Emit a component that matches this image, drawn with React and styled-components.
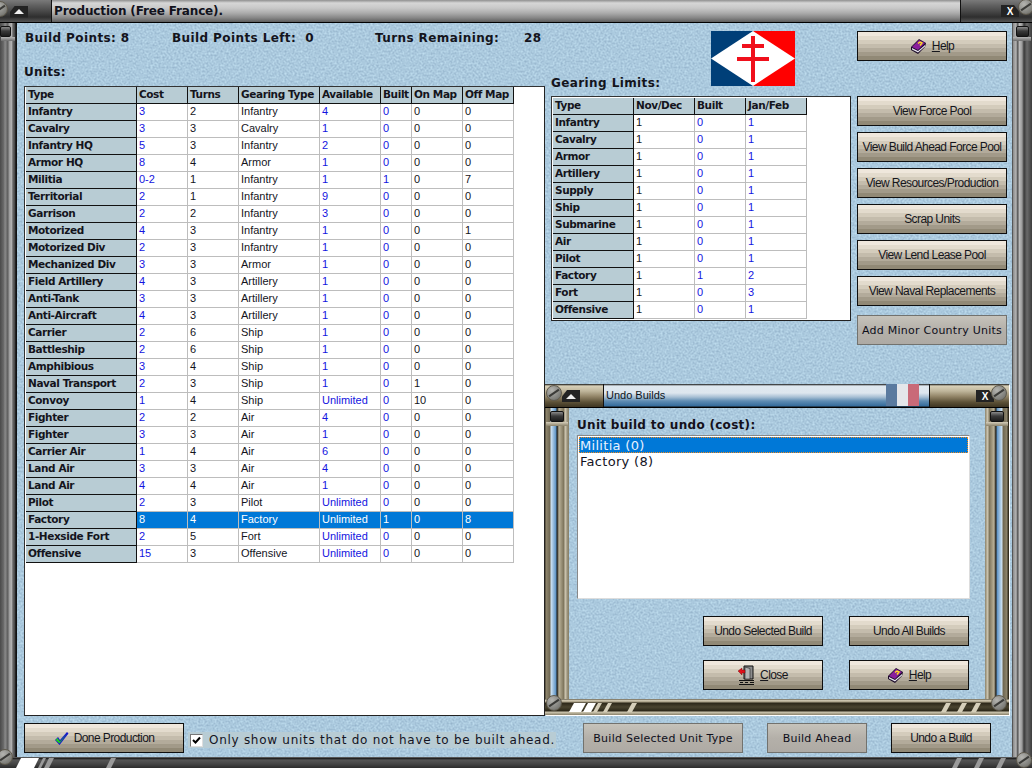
import React from "react";
import styled, { createGlobalStyle } from "styled-components";

const tones = {
  steel: {
    title: "linear-gradient(#8f8f8f 0,#d6d6d6 3px,#c8c8c8 8px,#acacac 13px,#858585 18px,#5c5c5c 22px)",
    cap: "linear-gradient(#7a7a7a 0,#5e5e5e 6px,#454545 12px,#2e2e2e 17px,#555 22px)",
    railL: "linear-gradient(90deg,#4a4a4a 0,#6d6d6d 4px,#8c8c8c 5px,#5a5a5a 8px,#9a9a9a 9px,#b4b4b4 12px,#454545 13px,#777 14px,#222 15px)",
    railR: "linear-gradient(90deg,#222 0,#8a8a8a 1px,#b4b4b4 4px,#444 6px,#c0c0c0 7px,#9a9a9a 10px,#3a3a3a 12px,#6a6a6a 15px,#3c3c3c 20px)",
    bottom: "linear-gradient(#9a9a9a 0,#111 1px,#555 3px,#444 7px,#2c2c2c 11px)",
  },
  brass: {
    title: "linear-gradient(#0f0f0f 0,#dfe8ef 2px,#dde6ee 9px,#a8c0d4 13px,#5f8cb2 17px,#356c9c 22px,#111 23px)",
    cap: "linear-gradient(#111 0,#d8d0b8 2px,#bfb69c 7px,#96896c 12px,#5d5238 18px,#3e3522 23px)",
    railL: "linear-gradient(90deg,#332d1e 0,#8f866e 1px,#6e6650 5px,#cfe3f3 6px,#5d93c4 11px,#16140e 12px,#b9b198 14px,#7a7158 19px,#d4cdb9 20px,#8b836b 23px)",
    railR: "linear-gradient(90deg,#8b836b 0,#d4cdb9 3px,#7a7158 4px,#b9b198 9px,#16140e 11px,#5d93c4 12px,#cfe3f3 17px,#6e6650 18px,#8f866e 22px,#332d1e 23px)",
    bottom: "linear-gradient(#3a3424 0,#d6cfba 1px,#a79e85 3px,#2c2719 4px,#4a4430 8px,#2c2719 12px,#cfc8b2 13px,#8a826a 16px)",
  },
};

const Global = createGlobalStyle`
  html, body { margin: 0; padding: 0; overflow: hidden; background: #333; }
  * { box-sizing: border-box; }
`;

const Frame = styled.div`
  display: grid;
  grid-template-columns: ${(p) => p.$left}px 1fr ${(p) => p.$right}px;
  grid-template-rows: ${(p) => p.$top}px 1fr ${(p) => p.$bottom}px;
  width: ${(p) => p.$w}px;
  height: ${(p) => p.$h}px;
  position: relative;
`;

const FloatingFrame = styled(Frame)`
  position: absolute;
  left: 528px;
  top: 361px;
  box-shadow: 1px 1px 0 #fff;
`;

const TitleBar = styled.div`
  grid-column: 1 / -1;
  display: flex;
  align-items: stretch;
  background: ${(p) => tones[p.$tone].title};
  border-bottom: 1px solid #000;
  position: relative;
`;

const TitleCap = styled.div`
  width: ${(p) => p.$w}px;
  flex: none;
  display: flex;
  align-items: center;
  justify-content: ${(p) => (p.$end ? "flex-end" : "flex-start")};
  padding: ${(p) => p.$pad};
  background: ${(p) => tones[p.$tone].cap};
  border-${(p) => (p.$end ? "left" : "right")}: 1px solid #111;
`;

const TitleText = styled.div`
  flex: 1;
  font: bold 12px "DejaVu Sans", sans-serif;
  letter-spacing: -0.15px;
  line-height: 23px;
  padding-left: 2px;
  color: #11121c;
`;

const SubTitleText = styled.div`
  flex: 1;
  font: 11px "Liberation Sans", sans-serif;
  line-height: 23px;
  padding-left: 2px;
  color: #0d1420;
`;

const CapButton = styled.div`
  width: 18px;
  height: 12px;
  background: #232323;
  clip-path: polygon(28% 0, 100% 0, 100% 100%, 0 100%, 0 55%);
  display: flex;
  align-items: center;
  justify-content: center;
  color: #fff;
  font: bold 10px "Liberation Sans", sans-serif;
`;

const CapButtonEnd = styled(CapButton)`
  clip-path: polygon(0 0, 72% 0, 100% 55%, 100% 100%, 0 100%);
`;

const Triangle = styled.span`
  width: 0;
  height: 0;
  border-left: 5px solid transparent;
  border-right: 5px solid transparent;
  border-bottom: 5px solid #eee;
`;

const FlagStripes = styled.div`
  display: flex;
  margin-right: 10px;
  flex: none;
`;

const Stripe = styled.span`
  width: 11px;
  height: 22px;
  background: ${(p) => p.$c};
`;

const Rail = styled.div`
  background: ${(p) => tones[p.$tone][p.$side]};
  position: relative;
  padding-top: 3px;
`;

const Knob = styled.div`
  height: 11px;
  width: ${(p) => p.$w}px;
  margin-left: ${(p) => p.$x}px;
  border-radius: 2px;
  border: 1px solid #111;
  background: linear-gradient(#8a8a8a, #3a3a3a 45%, #1c1c1c);
`;

const KnobCollar = styled.div`
  height: 4px;
  margin: 0 1px;
  background: linear-gradient(${(p) => (p.$tone === "brass" ? "#d4cdb9,#8b836b" : "#b5b5b5,#6c6c6c")});
`;

const BottomRail = styled.div`
  grid-column: 1 / -1;
  background: ${(p) => tones[p.$tone].bottom};
  display: flex;
  justify-content: space-between;
  padding: ${(p) => p.$pad};
`;

const Screw = styled.div`
  position: absolute;
  left: ${(p) => p.$x}px;
  top: ${(p) => p.$y}px;
  width: 16px;
  height: 16px;
  border-radius: 50%;
  background: radial-gradient(circle at 35% 30%, #b4b4b0, #7d7d78 70%, #55554f);
  border: 1px solid #5f5a4d;
  z-index: 3;
  &::after {
    content: "";
    position: absolute;
    left: 1px;
    right: 1px;
    top: 6px;
    height: 2px;
    background: #3b3b38;
    transform: rotate(-35deg);
  }
`;

const Content = styled.div`
  background-color: #a8c7de;
  border-left: 1px solid #111;
  position: relative;
  min-height: 0;
  min-width: 0;
`;

const TextureSvg = styled.svg`
  position: absolute;
  inset: 0;
  width: 100%;
  height: 100%;
  display: block;
`;

const Texture = ({ id }) => (
  <TextureSvg aria-hidden="true">
    <filter id={id} x="0" y="0" width="100%" height="100%" colorInterpolationFilters="sRGB">
      <feTurbulence type="fractalNoise" baseFrequency="0.5" numOctaves="3" seed="7" />
      <feColorMatrix values="0.24 0 0 0 0.55  0.24 0 0 0 0.67  0.20 0 0 0 0.77  0 0 0 0 1" />
    </filter>
    <rect width="100%" height="100%" filter={`url(#${id})`} />
  </TextureSvg>
);

const MainContent = styled(Content)`
  display: flex;
  flex-direction: column;
`;

const Main = styled.div`
  position: relative;
  display: flex;
  height: 693px;
  padding-left: 7px;
`;

const LeftCol = styled.div`
  width: 521px;
  flex: none;
  display: flex;
  flex-direction: column;
`;

const Stats = styled.div`
  height: 28px;
  padding: 2px 0 0 1px;
  display: flex;
  align-items: center;
`;

const Stat = styled.span`
  width: ${(p) => p.$w}px;
  flex: none;
  font: bold 12px "DejaVu Sans", sans-serif;
  letter-spacing: 0.4px;
  color: #14141c;
  white-space: pre;
`;

const Heading = styled.div`
  font: bold 12px "DejaVu Sans", sans-serif;
  letter-spacing: 0.3px;
  line-height: 16px;
  height: 22px;
  margin-top: 13px;
  color: #14141c;
`;

const TablePanel = styled.div`
  flex: ${(p) => (p.$grow ? 1 : "none")};
  height: ${(p) => (p.$grow ? "auto" : "225px")};
  background: #fff;
  border: 1px solid #333;
  border-right-color: #222;
  border-bottom-color: #222;
  padding: 1px;
  padding-top: ${(p) => (p.$grow ? 0 : 1)}px;
  min-height: 0;
`;

const Grid = styled.table`
  border-collapse: separate;
  border-spacing: 0;
  table-layout: fixed;
`;

const Head = styled.th`
  height: 17px;
  padding: 0 0 2px 2px;
  background: #b8ccd4;
  border-right: 1px solid #111;
  border-bottom: 1px solid #111;
  font: bold 10.5px "DejaVu Sans", sans-serif;
  letter-spacing: -0.4px;
  text-align: left;
  color: #14141c;
  white-space: nowrap;
  overflow: hidden;
`;

const Cell = styled.td`
  height: 17px;
  padding: 0 0 2px 2px;
  border-right: 1px solid #bdbdbd;
  border-bottom: 1px solid #bdbdbd;
  font: 11px "Liberation Sans", sans-serif;
  color: ${(p) => (p.$sel ? "#fff" : p.$blue ? "#1414e0" : "#14141c")};
  background: ${(p) => (p.$sel ? "#0078d7" : "#fff")};
  white-space: nowrap;
  overflow: hidden;
`;

const MidCol = styled.div`
  width: 300px;
  flex: none;
  margin-left: 6px;
  display: flex;
  flex-direction: column;
`;

const FlagRow = styled.div`
  height: 65px;
  margin-top: 8px;
  display: flex;
  justify-content: space-between;
  padding-right: 56px;
`;

const SideHeading = styled.div`
  align-self: flex-end;
  font: bold 12px "DejaVu Sans", sans-serif;
  letter-spacing: 0.4px;
  line-height: 14px;
  margin-bottom: 6px;
  color: #14141c;
`;

const RightCol = styled.div`
  width: 150px;
  flex: none;
  margin-left: 6px;
  padding-top: 8px;
  display: flex;
  flex-direction: column;
  gap: 6px;
`;

const Spacer = styled.div`
  height: ${(p) => p.$h}px;
  flex: none;
`;

const Btn = styled.button`
  width: ${(p) => p.$w || 150}px;
  height: 30px;
  flex: none;
  padding: 0;
  display: flex;
  align-items: center;
  justify-content: center;
  gap: ${(p) => p.$gap || 5}px;
  border: 1px solid #0e0e0e;
  border-radius: 0;
  background: linear-gradient(
    #efe7dc 0 4px, #e3dbcd 4px 8px, #d4ccbc 8px 12px, #c4bcac 12px 16px,
    #b3ab9b 16px 20px, #a29a89 20px 24px, #918976 24px 28px
  );
  font: 12px "Liberation Sans", sans-serif;
  letter-spacing: -0.58px;
  color: #16161c;
`;

const Und = styled.span`
  text-decoration: underline;
`;

const DisabledBtn = styled.button`
  width: ${(p) => p.$w || 150}px;
  height: 30px;
  flex: none;
  padding: 0;
  margin-top: ${(p) => p.$mt || 0}px;
  border: 1px solid #72726e;
  border-radius: 0;
  background: linear-gradient(#c6c3bb, #b4b0a9 50%, #aeaaa4);
  font: 11px "DejaVu Sans", sans-serif;
  letter-spacing: 0.25px;
  color: #0e0e1a;
  white-space: nowrap;
`;

const BottomBar = styled.div`
  position: relative;
  display: flex;
  padding: 7px 0 0 7px;
`;

const ShowOnly = styled.label`
  display: flex;
  align-items: center;
  gap: 6px;
  height: 16px;
  margin: 9px 0 0 4px;
  padding: 0 1px 0 2px;
  background: #b8ccd4;
  font: 12px "DejaVu Sans", sans-serif;
  letter-spacing: 0.72px;
  color: #14141f;
  white-space: nowrap;
`;

const Tick = styled.span`
  width: 13px;
  height: 13px;
  flex: none;
  background: #fff;
  border: 1px solid;
  border-color: #777 #ddd #ddd #777;
  display: flex;
  align-items: center;
  justify-content: center;
`;

const ActionGroup = styled.div`
  display: flex;
  gap: 24px;
  margin-left: 27px;
`;

const SubBody = styled(Content)`
  border-left: 0;
`;

const SubInner = styled.div`
  position: relative;
  padding-left: 8px;
  display: flex;
  flex-direction: column;
`;

const ListLabel = styled.div`
  height: 27px;
  padding-top: 10px;
  font: bold 12px "DejaVu Sans", sans-serif;
  letter-spacing: 0.3px;
  line-height: 14px;
  color: #14101a;
`;

const ListBox = styled.div`
  width: 393px;
  height: 164px;
  flex: none;
  background: #fff;
  border: 1px solid;
  border-color: #888 #ddd #ddd #888;
  padding: 1px;
`;

const ListItem = styled.div`
  height: 16px;
  padding-left: 1px;
  font: 13px "DejaVu Sans", sans-serif;
  line-height: 17px;
  letter-spacing: 0.3px;
  color: ${(p) => (p.$sel ? "#e8f2ff" : "#14141f")};
  background: ${(p) => (p.$sel ? "#0078d7" : "transparent")};
  outline: ${(p) => (p.$sel ? "1px dotted #f08a1d" : "none")};
  outline-offset: -1px;
`;

const SubActions = styled.div`
  display: grid;
  grid-template-columns: 120px 120px;
  grid-auto-rows: 30px;
  gap: 14px 26px;
  margin: 17px 0 0 126px;
`;

const Book = () => (
  <svg width="17" height="17" viewBox="0 0 17 17">
    <path d="M1 9 9 1l7 4-1 4-7 7-7-4z" fill="#1a0a28" />
    <path d="M2 9 9 2l6 3-7 7z" fill="#8a1f9c" />
    <path d="M2 10l6 3 7-6v1.500l-7 6-6-3z" fill="#e8e4ef" />
    <path d="M8 5.500l2-1.500 2 1-2 2.500" stroke="#ffe21a" strokeWidth="1.400" fill="none" />
  </svg>
);

const Door = () => (
  <svg width="17" height="20" viewBox="0 0 17 20">
    <path d="M6 1h9v13H6z" fill="#8c8c8c" stroke="#111" />
    <path d="M7 2l5 1.500V14H7z" fill="#b4b4b4" stroke="#222" strokeWidth=".6" />
    <path d="M0 6l4-3v2h3v3H4v2z" fill="#e0101a" stroke="#600" strokeWidth=".4" />
    <path d="M1 15h15v1H1zM2 17h3v1H2zM7 17h3v1H7zM12 17h4v1h-4zM1 19h15v1H1z" fill="#111" />
  </svg>
);

const Check = () => (
  <svg width="15" height="15" viewBox="0 0 15 15">
    <path d="M1 9l3-3 2 3L13 1l1.500 1.500L5.500 14z" fill="#1414d0" />
    <path d="M1.500 9l2-2 2.500 3.500L13 2.500 5.500 12.500z" fill="#18d020" />
  </svg>
);

const SmallCheck = () => (
  <svg width="9" height="9" viewBox="0 0 9 9">
    <path d="M1 4l2.500 2.500L8 1.500" stroke="#000" strokeWidth="2" fill="none" />
  </svg>
);

const Flag = () => (
  <svg width="84" height="55" viewBox="0 0 84 55">
    <rect width="42" height="55" fill="#003f78" />
    <rect x="42" width="42" height="55" fill="#ff0000" />
    <path d="M0 27.500 42 0l42 27.500L42 55z" fill="#fff" />
    <path d="M40 5h4v8h9v4h-9v9h14v4H44v21h-4V30H26v-4h14v-9h-9v-4h9z" fill="#f0101c" />
  </svg>
);

const RailMarks = ({ w, h, marks, fill }) => (
  <svg width={w} height={h} viewBox={`0 0 ${w} ${h}`}>
    {marks.map(([x, wd, c], i) => (
      <polygon
        key={i}
        points={`${x + 5},0 ${x + wd + 5},0 ${x + wd},${h} ${x},${h}`}
        fill={c || fill}
      />
    ))}
  </svg>
);

const unitCols = [111, 51, 51, 81, 61, 31, 51, 51];
const gearCols = [81, 61, 51, 61];

const units = [
  ["Infantry", "3", "2", "Infantry", "4", "0", "0", "0"],
  ["Cavalry", "3", "3", "Cavalry", "1", "0", "0", "0"],
  ["Infantry HQ", "5", "3", "Infantry", "2", "0", "0", "0"],
  ["Armor HQ", "8", "4", "Armor", "1", "0", "0", "0"],
  ["Militia", "0-2", "1", "Infantry", "1", "1", "0", "7"],
  ["Territorial", "2", "1", "Infantry", "9", "0", "0", "0"],
  ["Garrison", "2", "2", "Infantry", "3", "0", "0", "0"],
  ["Motorized", "4", "3", "Infantry", "1", "0", "0", "1"],
  ["Motorized Div", "2", "3", "Infantry", "1", "0", "0", "0"],
  ["Mechanized Div", "3", "3", "Armor", "1", "0", "0", "0"],
  ["Field Artillery", "4", "3", "Artillery", "1", "0", "0", "0"],
  ["Anti-Tank", "3", "3", "Artillery", "1", "0", "0", "0"],
  ["Anti-Aircraft", "4", "3", "Artillery", "1", "0", "0", "0"],
  ["Carrier", "2", "6", "Ship", "1", "0", "0", "0"],
  ["Battleship", "2", "6", "Ship", "1", "0", "0", "0"],
  ["Amphibious", "3", "4", "Ship", "1", "0", "0", "0"],
  ["Naval Transport", "2", "3", "Ship", "1", "0", "1", "0"],
  ["Convoy", "1", "4", "Ship", "Unlimited", "0", "10", "0"],
  ["Fighter", "2", "2", "Air", "4", "0", "0", "0"],
  ["Fighter", "3", "3", "Air", "1", "0", "0", "0"],
  ["Carrier Air", "1", "4", "Air", "6", "0", "0", "0"],
  ["Land Air", "3", "3", "Air", "4", "0", "0", "0"],
  ["Land Air", "4", "4", "Air", "1", "0", "0", "0"],
  ["Pilot", "2", "3", "Pilot", "Unlimited", "0", "0", "0"],
  ["Factory", "8", "4", "Factory", "Unlimited", "1", "0", "8"],
  ["1-Hexside Fort", "2", "5", "Fort", "Unlimited", "0", "0", "0"],
  ["Offensive", "15", "3", "Offensive", "Unlimited", "0", "0", "0"],
];

const gearing = [
  ["Infantry", "1", "0", "1"],
  ["Cavalry", "1", "0", "1"],
  ["Armor", "1", "0", "1"],
  ["Artillery", "1", "0", "1"],
  ["Supply", "1", "0", "1"],
  ["Ship", "1", "0", "1"],
  ["Submarine", "1", "0", "1"],
  ["Air", "1", "0", "1"],
  ["Pilot", "1", "0", "1"],
  ["Factory", "1", "1", "2"],
  ["Fort", "1", "0", "3"],
  ["Offensive", "1", "0", "1"],
];

const DataTable = ({ cols, head, rows, blue, selected }) => (
  <Grid style={{ width: cols.reduce((a, b) => a + b, 0) }}>
    <colgroup>
      {cols.map((w, i) => (
        <col key={i} style={{ width: w }} />
      ))}
    </colgroup>
    <thead>
      <tr>
        {head.map((h) => (
          <Head key={h}>{h}</Head>
        ))}
      </tr>
    </thead>
    <tbody>
      {rows.map((r, i) => (
        <tr key={i}>
          {r.map((v, j) =>
            j === 0 ? (
              <Head key={j} scope="row">{v}</Head>
            ) : (
              <Cell key={j} $sel={i === selected} $blue={blue.includes(j)}>{v}</Cell>
            )
          )}
        </tr>
      ))}
    </tbody>
  </Grid>
);

export default function App() {
  return (
    <>
      <Global />
      <Frame $w={1032} $h={768} $left={16} $right={20} $top={23} $bottom={11}>
        <TitleBar $tone="steel">
          <TitleCap $tone="steel" $w={52} $pad="1px 0 0 10px">
            <CapButton><Triangle /></CapButton>
          </TitleCap>
          <TitleText>Production (Free France).</TitleText>
          <TitleCap $tone="steel" $w={72} $end $pad="0 13px 0 0">
            <CapButtonEnd>X</CapButtonEnd>
          </TitleCap>
        </TitleBar>
        <Screw $x={-8} $y={1} />
        <Screw $x={1018} $y={-1} />

        <Rail $tone="steel" $side="railL">
          <Knob $w={11} $x={0} />
          <KnobCollar $tone="steel" />
        </Rail>

        <MainContent>
          <Texture id="tex-main" />
          <Main>
            <LeftCol>
              <Stats>
                <Stat $w={147}>Build Points: 8</Stat>
                <Stat $w={203}>Build Points Left:  0</Stat>
                <Stat $w={149}>Turns Remaining:</Stat>
                <Stat $w={20}>28</Stat>
              </Stats>
              <Heading>Units:</Heading>
              <TablePanel $grow>
                <DataTable
                  cols={unitCols}
                  head={["Type", "Cost", "Turns", "Gearing Type", "Available", "Built", "On Map", "Off Map"]}
                  rows={units}
                  blue={[1, 4, 5]}
                  selected={24}
                />
              </TablePanel>
            </LeftCol>
            <MidCol>
              <FlagRow>
                <SideHeading>Gearing Limits:</SideHeading>
                <Flag />
              </FlagRow>
              <TablePanel>
                <DataTable
                  cols={gearCols}
                  head={["Type", "Nov/Dec", "Built", "Jan/Feb"]}
                  rows={gearing}
                  blue={[2, 3]}
                  selected={-1}
                />
              </TablePanel>
            </MidCol>
            <RightCol>
              <Btn><Book /><span><Und>H</Und>elp</span></Btn>
              <Spacer $h={23} />
              <Btn>View Force Pool</Btn>
              <Btn>View Build Ahead Force Pool</Btn>
              <Btn>View Resources/Production</Btn>
              <Btn>Scrap Units</Btn>
              <Btn>View Lend Lease Pool</Btn>
              <Btn>View Naval Replacements</Btn>
              <DisabledBtn $mt={3}>Add Minor Country Units</DisabledBtn>
            </RightCol>
          </Main>
          <BottomBar>
            <Btn $w={160}><Check /><span>Done Production</span></Btn>
            <ShowOnly>
              <Tick><SmallCheck /></Tick>
              Only show units that do not have to be built ahead.
            </ShowOnly>
            <ActionGroup>
              <DisabledBtn $w={160}>Build Selected Unit Type</DisabledBtn>
              <DisabledBtn $w={100}>Build Ahead</DisabledBtn>
              <Btn $w={100}>Undo a Build</Btn>
            </ActionGroup>
          </BottomBar>

          <FloatingFrame $w={464} $h={331} $left={24} $right={24} $top={24} $bottom={16}>
            <TitleBar $tone="brass">
              <TitleCap $tone="brass" $w={59} $pad="1px 0 0 17px">
                <CapButton><Triangle /></CapButton>
              </TitleCap>
              <SubTitleText>Undo Builds</SubTitleText>
              <FlagStripes>
                <Stripe $c="#5a7a9f" />
                <Stripe $c="#e4e6ea" />
                <Stripe $c="#c96a78" />
              </FlagStripes>
              <TitleCap $tone="brass" $w={80} $end $pad="1px 15px 0 0">
                <CapButtonEnd>X</CapButtonEnd>
              </TitleCap>
            </TitleBar>
            <Screw $x={1} $y={1} />
            <Screw $x={446} $y={1} />

            <Rail $tone="brass" $side="railL">
              <Knob $w={14} $x={5} />
              <KnobCollar $tone="brass" />
            </Rail>
            <SubBody>
              <Texture id="tex-sub" />
              <SubInner>
                <ListLabel>Unit build to undo (cost):</ListLabel>
                <ListBox>
                  <ListItem $sel>Militia (0)</ListItem>
                  <ListItem>Factory (8)</ListItem>
                </ListBox>
                <SubActions>
                  <Btn $w={120}>Undo Selected Build</Btn>
                  <Btn $w={120}>Undo All Builds</Btn>
                  <Btn $w={120}><Door /><span><Und>C</Und>lose</span></Btn>
                  <Btn $w={120}><Book /><span><Und>H</Und>elp</span></Btn>
                </SubActions>
              </SubInner>
            </SubBody>
            <Rail $tone="brass" $side="railR">
              <Knob $w={14} $x={5} />
              <KnobCollar $tone="brass" />
            </Rail>

            <BottomRail $tone="brass" $pad="4px 24px 3px 24px">
              <RailMarks w={72} h={9} fill="#d6cfba" marks={[[0, 12, "#fff"], [14, 8, "#fff"], [24, 4], [34, 4], [58, 5]]} />
              <RailMarks w={44} h={9} fill="#d6cfba" marks={[[0, 5], [16, 5], [30, 5]]} />
            </BottomRail>
            <Screw $x={1} $y={311} />
            <Screw $x={446} $y={311} />
          </FloatingFrame>
        </MainContent>

        <Rail $tone="steel" $side="railR">
          <Knob $w={13} $x={4} />
          <KnobCollar $tone="steel" />
        </Rail>

        <BottomRail $tone="steel" $pad="1px 20px 0 16px">
          <RailMarks w={100} h={10} fill="#9a9a9a" marks={[[0, 18, "#fff"], [22, 3], [28, 5], [90, 5]]} />
          <RailMarks w={60} h={10} fill="#9a9a9a" marks={[[0, 5], [22, 5], [44, 5]]} />
        </BottomRail>
        <Screw $x={-3} $y={749} />
        <Screw $x={1016} $y={752} />
      </Frame>
    </>
  );
}
